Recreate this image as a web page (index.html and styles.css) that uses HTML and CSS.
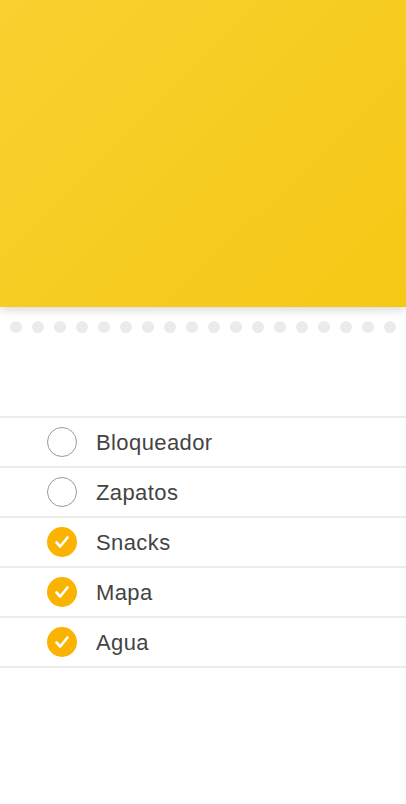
FILE: index.html
```html
<!DOCTYPE html>
<html>
<head>
<meta charset="utf-8">
<link rel="stylesheet" href="styles.css">
</head>
<body>
<div class="hero"></div>
<div class="dots">
  <span></span><span></span><span></span><span></span><span></span><span></span>
  <span></span><span></span><span></span><span></span><span></span><span></span>
  <span></span><span></span><span></span><span></span><span></span><span></span>
</div>
<ul class="list">
  <li class="item"><span class="check"></span><span class="label">Bloqueador</span></li>
  <li class="item"><span class="check"></span><span class="label">Zapatos</span></li>
  <li class="item done"><span class="check"><svg viewBox="0 0 30 30" width="30" height="30"><path d="M9.5 15.5 L13.2 19.5 L20.5 10.5" fill="none" stroke="#fff" stroke-width="2.6" stroke-linecap="round" stroke-linejoin="round"/></svg></span><span class="label">Snacks</span></li>
  <li class="item done"><span class="check"><svg viewBox="0 0 30 30" width="30" height="30"><path d="M9.5 15.5 L13.2 19.5 L20.5 10.5" fill="none" stroke="#fff" stroke-width="2.6" stroke-linecap="round" stroke-linejoin="round"/></svg></span><span class="label">Mapa</span></li>
  <li class="item done"><span class="check"><svg viewBox="0 0 30 30" width="30" height="30"><path d="M9.5 15.5 L13.2 19.5 L20.5 10.5" fill="none" stroke="#fff" stroke-width="2.6" stroke-linecap="round" stroke-linejoin="round"/></svg></span><span class="label">Agua</span></li>
</ul>
</body>
</html>
```
FILE: styles.css
```css
html, body {
  margin: 0;
  padding: 0;
  background: #ffffff;
  font-family: "Liberation Sans", Arial, sans-serif;
}
.hero {
  height: 307px;
  background: linear-gradient(135deg, #f9d030 0%, #f7cc22 50%, #f6c816 100%);
  box-shadow: 0 2px 10px rgba(0, 0, 0, 0.18);
  position: relative;
  z-index: 1;
}
.dots {
  display: flex;
  gap: 10px;
  padding: 14px 0 0 10px;
  height: 12px;
}
.dots span {
  width: 12px;
  height: 12px;
  border-radius: 50%;
  background: #ebebeb;
  flex: none;
}
.list {
  list-style: none;
  margin: 0;
  padding: 0;
  margin-top: 83px;
  border-top: 2px solid #ebebeb;
}
.item {
  display: flex;
  align-items: center;
  height: 48px;
  border-bottom: 2px solid #ebebeb;
  padding-left: 47px;
}
.check {
  width: 28px;
  height: 28px;
  border: 1px solid #9a9a9a;
  border-radius: 50%;
  flex: none;
  display: flex;
  align-items: center;
  justify-content: center;
}
.done .check {
  border: none;
  width: 30px;
  height: 30px;
  background: #f9b300;
}
.label {
  margin-left: 19px;
  padding-top: 2px;
  font-size: 22px;
  letter-spacing: 0.4px;
  color: #444444;
}
```
